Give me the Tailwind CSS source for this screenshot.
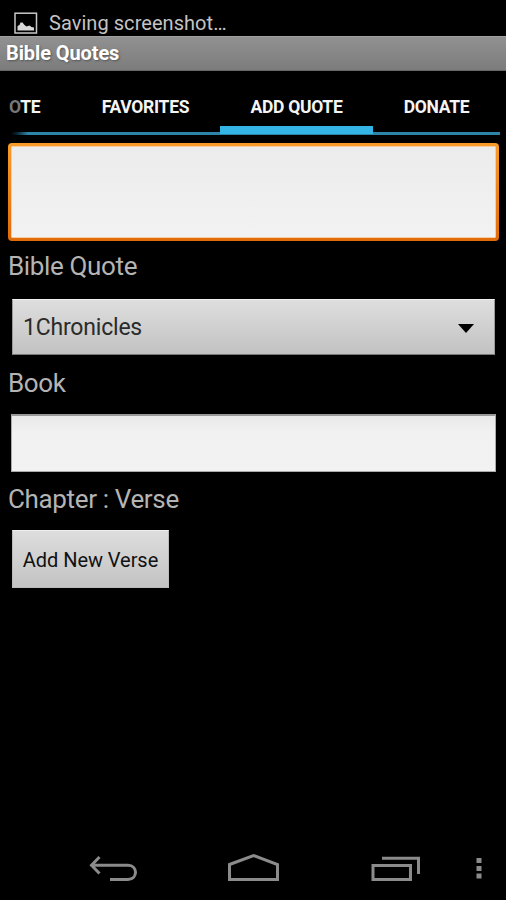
<!DOCTYPE html>
<html lang="en">

<head>
    <meta charset="UTF-8" />
    <meta name="viewport" content="width=device-width, initial-scale=1.0" />
    <title>Bible Quotes</title>
    <script src="https://cdn.jsdelivr.net/npm/@tailwindcss/browser@4"></script>
</head>

<body class="bg-black h-[900px] w-[506px] overflow-hidden flex flex-col font-['Roboto',sans-serif]">
    <!-- Status bar -->
    <div class="h-9 shrink-0 flex items-start pl-[14px] pt-3 text-[#c4c4c4]">
        <svg class="w-6 h-[22px] shrink-0" viewBox="0 0 24 22">
            <rect x="1" y="1.2" width="21.5" height="19.8" fill="none" stroke="#c8c8c8" stroke-width="1.5" />
            <path d="M3.500 18.500v-4.500l2-1 1-2.500h2l2 2.500 2 1.500 3-1 2 1.500 2.500.5v3z" fill="#d8d8d8" />
        </svg>
        <span class="ml-[11px] -mt-px text-xl leading-6 tracking-[0.05px] whitespace-nowrap">Saving screenshot…</span>
    </div>

    <!-- Title bar -->
    <div class="h-[35px] shrink-0 pl-[6px] border-t border-[#a0a0a0] border-b border-b-[#666] bg-linear-to-b from-[#919191] to-[#7c7c7c] text-white text-xl font-bold leading-[33px]">
        <h1 class="tracking-[-0.1px] [text-shadow:1px_1px_2px_#555]">Bible Quotes</h1>
    </div>

    <!-- Tabs -->
    <div class="mx-2 h-[65px] w-[492px] shrink-0 relative flex text-[#f4f4f4] text-[17.500px] tracking-[-0.3px] font-bold leading-[73px] text-center whitespace-nowrap">
        <div class="w-[63px] text-left pl-px"><span class="text-[#777]">O</span>TE</div>
        <div class="w-[149px]">FAVORITES</div>
        <div class="w-[153px]">ADD QUOTE</div>
        <div class="w-[127px]">DONATE</div>
        <div class="absolute left-0 top-[61px] w-full h-[3px] bg-linear-to-r from-black to-[#2d85a9] to-[20px]"></div>
        <div class="absolute left-[212px] top-[55px] w-[153px] h-2 bg-[#33b5e5]"></div>
    </div>

    <!-- Quote form -->
    <div class="flex flex-col items-start pl-2 pt-[7px] text-[#b4b4b4] text-[26px] tracking-[-0.35px] leading-8">
        <div class="w-[491px] h-[98px] rounded-[4px] bg-linear-to-b from-[#f99b2a] to-[#e06a08] p-[3px]">
            <div class="size-full rounded-[1px] border border-[#f5cda0] bg-linear-to-b from-[#ececec] to-[#f2f2f2]"></div>
        </div>
        <label class="mt-[9px]">Bible Quote</label>
        <div class="ml-[4px] mt-[17px] w-[483px] h-[56px] pl-[11px] pr-5 flex items-center justify-between border border-[#999] border-t-[#f0f0f0] border-b-[#777] bg-linear-to-b from-[#dedede] to-[#c2c2c2] text-[#2b2b2b] text-[23px] tracking-[-0.2px]">
            <span class="-ml-px mt-px">1Chronicles</span>
            <svg class="w-4 h-[9px] mt-[2px]" viewBox="0 0 16 9">
                <path d="M0 0h16L8 9z" fill="#000" />
            </svg>
        </div>
        <label class="mt-3">Book</label>
        <div class="ml-[3px] mt-[15px] w-[485px] h-[58px] border border-t-2 border-[#aaa] border-t-[#999] bg-linear-to-b from-[#e9e9e9] via-[#f1f1f1] via-30% to-[#f2f2f2]"></div>
        <label class="mt-[11px]">Chapter : Verse</label>
        <button class="ml-[4px] mt-[15px] w-[157px] h-[58px] pt-px border border-[#bbb] border-t-[#eee] bg-linear-to-b from-[#dddddd] to-[#c3c3c3] text-[#111] text-[20px] tracking-[-0.05px] whitespace-nowrap">Add New Verse</button>
    </div>

    <!-- Navigation bar -->
    <div class="mt-auto h-[60px] shrink-0">
        <svg class="w-[506px] h-[60px]" viewBox="0 0 506 60" fill="none" stroke="#8b8b8b" stroke-width="3">
            <path d="M99.500 17L91.500 25.200 99.500 33.500M92 25.200h36c10 0 10 14.300 0 14.300h-18" />
            <path d="M229.500 24.500L253.500 15.500 277.500 24.500V39.500h-48z" />
            <path d="M373 25.500h37.500v14H373zM382 18.200h36.500V34" />
            <path d="M476.500 20.500h5M476.500 28.500h5M476.500 36h5" stroke-width="5" />
        </svg>
    </div>
</body>

</html>
